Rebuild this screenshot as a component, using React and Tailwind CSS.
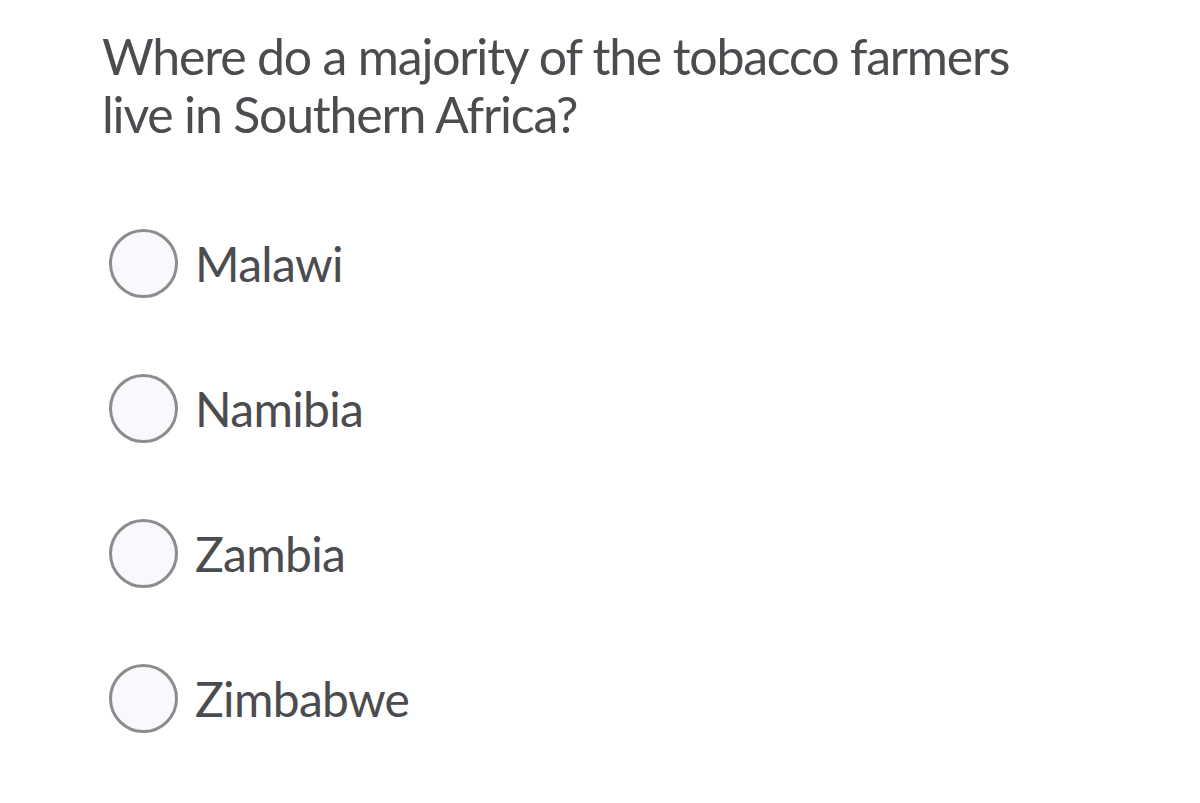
export default function App() {
  const options = ["Malawi", "Namibia", "Zambia", "Zimbabwe"];
  return (
    <div className="w-[1200px] h-[803px] bg-white overflow-hidden text-[#4a4c4f]" style={{ fontFamily: "Lato, 'Open Sans', sans-serif" }}>
      <div className="pl-[102px] pt-[27px]">
        <p className="text-[50px] leading-[58px] tracking-[-1.2px] w-[950px]">
          Where do a majority of the tobacco farmers live in Southern Africa?
        </p>
        <div className="mt-[48px] flex flex-col">
          {options.map((o) => (
            <div key={o} className="h-[145px] flex items-center">
              <div className="ml-[7px] w-[69px] h-[69px] rounded-full border-[3px] border-[#8c8c8c] bg-[#f7f9fd]" />
              <span className="ml-[17px] text-[48px] leading-[58px] tracking-[-0.7px]">{o}</span>
            </div>
          ))}
        </div>
      </div>
    </div>
  );
}
